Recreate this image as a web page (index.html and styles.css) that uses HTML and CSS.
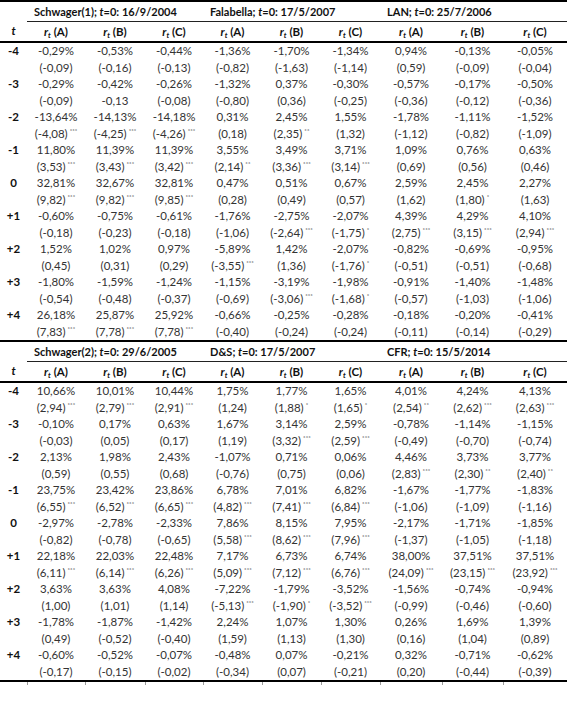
FILE: index.html
```html
<!DOCTYPE html>
<html>
<head>
<meta charset="utf-8">
<link rel="stylesheet" href="styles.css">
</head>
<body>
<table class="tbl">
<colgroup>
<col class="c-t"><col class="c1"><col class="c2"><col class="c3"><col class="c4"><col class="c5"><col class="c6"><col class="c7"><col class="c8"><col class="c9">
</colgroup>
<tbody class="panel first">
<tr class="title-row"><th class="blank"></th><th colspan="3" class="title">Schwager(1); <i>t</i>=0: 16/9/2004</th><th colspan="3" class="title">Falabella; <i>t</i>=0: 17/5/2007</th><th colspan="3" class="title">LAN; <i>t</i>=0: 25/7/2006</th></tr>
<tr class="head-row"><th><i>t</i></th><th><i>r<sub>t</sub></i> (A)</th><th><i>r<sub>t</sub></i> (B)</th><th><i>r<sub>t</sub></i> (C)</th><th><i>r<sub>t</sub></i> (A)</th><th><i>r<sub>t</sub></i> (B)</th><th><i>r<sub>t</sub></i> (C)</th><th><i>r<sub>t</sub></i> (A)</th><th><i>r<sub>t</sub></i> (B)</th><th><i>r<sub>t</sub></i> (C)</th></tr>
<tr><th>-4</th><td>-0,29%</td><td>-0,53%</td><td>-0,44%</td><td>-1,36%</td><td>-1,70%</td><td>-1,34%</td><td>0,94%</td><td>-0,13%</td><td>-0,05%</td></tr>
<tr><th></th><td>(-0,09)</td><td>(-0,16)</td><td>(-0,13)</td><td>(-0,82)</td><td>(-1,63)</td><td>(-1,14)</td><td>(0,59)</td><td>(-0,09)</td><td>(-0,04)</td></tr>
<tr><th>-3</th><td>-0,29%</td><td>-0,42%</td><td>-0,26%</td><td>-1,32%</td><td>0,37%</td><td>-0,30%</td><td>-0,57%</td><td>-0,17%</td><td>-0,50%</td></tr>
<tr><th></th><td>(-0,09)</td><td>-0,13</td><td>(-0,08)</td><td>(-0,80)</td><td>(0,36)</td><td>(-0,25)</td><td>(-0,36)</td><td>(-0,12)</td><td>(-0,36)</td></tr>
<tr><th>-2</th><td>-13,64%</td><td>-14,13%</td><td>-14,18%</td><td>0,31%</td><td>2,45%</td><td>1,55%</td><td>-1,78%</td><td>-1,11%</td><td>-1,52%</td></tr>
<tr><th></th><td>(-4,08)<sup>***</sup></td><td>(-4,25)<sup>***</sup></td><td>(-4,26)<sup>***</sup></td><td>(0,18)</td><td>(2,35)<sup>**</sup></td><td>(1,32)</td><td>(-1,12)</td><td>(-0,82)</td><td>(-1,09)</td></tr>
<tr><th>-1</th><td>11,80%</td><td>11,39%</td><td>11,39%</td><td>3,55%</td><td>3,49%</td><td>3,71%</td><td>1,09%</td><td>0,76%</td><td>0,63%</td></tr>
<tr><th></th><td>(3,53)<sup>***</sup></td><td>(3,43)<sup>***</sup></td><td>(3,42)<sup>***</sup></td><td>(2,14)<sup>**</sup></td><td>(3,36)<sup>***</sup></td><td>(3,14)<sup>***</sup></td><td>(0,69)</td><td>(0,56)</td><td>(0,46)</td></tr>
<tr><th>0</th><td>32,81%</td><td>32,67%</td><td>32,81%</td><td>0,47%</td><td>0,51%</td><td>0,67%</td><td>2,59%</td><td>2,45%</td><td>2,27%</td></tr>
<tr><th></th><td>(9,82)<sup>***</sup></td><td>(9,82)<sup>***</sup></td><td>(9,85)<sup>***</sup></td><td>(0,28)</td><td>(0,49)</td><td>(0,57)</td><td>(1,62)</td><td>(1,80)<sup>*</sup></td><td>(1,63)</td></tr>
<tr><th>+1</th><td>-0,60%</td><td>-0,75%</td><td>-0,61%</td><td>-1,76%</td><td>-2,75%</td><td>-2,07%</td><td>4,39%</td><td>4,29%</td><td>4,10%</td></tr>
<tr><th></th><td>(-0,18)</td><td>(-0,23)</td><td>(-0,18)</td><td>(-1,06)</td><td>(-2,64)<sup>***</sup></td><td>(-1,75)<sup>*</sup></td><td>(2,75)<sup>***</sup></td><td>(3,15)<sup>***</sup></td><td>(2,94)<sup>***</sup></td></tr>
<tr><th>+2</th><td>1,52%</td><td>1,02%</td><td>0,97%</td><td>-5,89%</td><td>1,42%</td><td>-2,07%</td><td>-0,82%</td><td>-0,69%</td><td>-0,95%</td></tr>
<tr><th></th><td>(0,45)</td><td>(0,31)</td><td>(0,29)</td><td>(-3,55)<sup>***</sup></td><td>(1,36)</td><td>(-1,76)<sup>*</sup></td><td>(-0,51)</td><td>(-0,51)</td><td>(-0,68)</td></tr>
<tr><th>+3</th><td>-1,80%</td><td>-1,59%</td><td>-1,24%</td><td>-1,15%</td><td>-3,19%</td><td>-1,98%</td><td>-0,91%</td><td>-1,40%</td><td>-1,48%</td></tr>
<tr><th></th><td>(-0,54)</td><td>(-0,48)</td><td>(-0,37)</td><td>(-0,69)</td><td>(-3,06)<sup>***</sup></td><td>(-1,68)<sup>*</sup></td><td>(-0,57)</td><td>(-1,03)</td><td>(-1,06)</td></tr>
<tr><th>+4</th><td>26,18%</td><td>25,87%</td><td>25,92%</td><td>-0,66%</td><td>-0,25%</td><td>-0,28%</td><td>-0,18%</td><td>-0,20%</td><td>-0,41%</td></tr>
<tr class="last"><th></th><td>(7,83)<sup>***</sup></td><td>(7,78)<sup>***</sup></td><td>(7,78)<sup>***</sup></td><td>(-0,40)</td><td>(-0,24)</td><td>(-0,24)</td><td>(-0,11)</td><td>(-0,14)</td><td>(-0,29)</td></tr>
</tbody>
<tbody class="panel">
<tr class="title-row"><th class="blank"></th><th colspan="3" class="title">Schwager(2); <i>t</i>=0: 29/6/2005</th><th colspan="3" class="title">D&amp;S; <i>t</i>=0: 17/5/2007</th><th colspan="3" class="title">CFR; <i>t</i>=0: 15/5/2014</th></tr>
<tr class="head-row"><th><i>t</i></th><th><i>r<sub>t</sub></i> (A)</th><th><i>r<sub>t</sub></i> (B)</th><th><i>r<sub>t</sub></i> (C)</th><th><i>r<sub>t</sub></i> (A)</th><th><i>r<sub>t</sub></i> (B)</th><th><i>r<sub>t</sub></i> (C)</th><th><i>r<sub>t</sub></i> (A)</th><th><i>r<sub>t</sub></i> (B)</th><th><i>r<sub>t</sub></i> (C)</th></tr>
<tr><th>-4</th><td>10,66%</td><td>10,01%</td><td>10,44%</td><td>1,75%</td><td>1,77%</td><td>1,65%</td><td>4,01%</td><td>4,24%</td><td>4,13%</td></tr>
<tr><th></th><td>(2,94)<sup>***</sup></td><td>(2,79)<sup>***</sup></td><td>(2,91)<sup>***</sup></td><td>(1,24)</td><td>(1,88)<sup>*</sup></td><td>(1,65)<sup>*</sup></td><td>(2,54)<sup>**</sup></td><td>(2,62)<sup>***</sup></td><td>(2,63)<sup>***</sup></td></tr>
<tr><th>-3</th><td>-0,10%</td><td>0,17%</td><td>0,63%</td><td>1,67%</td><td>3,14%</td><td>2,59%</td><td>-0,78%</td><td>-1,14%</td><td>-1,15%</td></tr>
<tr><th></th><td>(-0,03)</td><td>(0,05)</td><td>(0,17)</td><td>(1,19)</td><td>(3,32)<sup>***</sup></td><td>(2,59)<sup>***</sup></td><td>(-0,49)</td><td>(-0,70)</td><td>(-0,74)</td></tr>
<tr><th>-2</th><td>2,13%</td><td>1,98%</td><td>2,43%</td><td>-1,07%</td><td>0,71%</td><td>0,06%</td><td>4,46%</td><td>3,73%</td><td>3,77%</td></tr>
<tr><th></th><td>(0,59)</td><td>(0,55)</td><td>(0,68)</td><td>(-0,76)</td><td>(0,75)</td><td>(0,06)</td><td>(2,83)<sup>***</sup></td><td>(2,30)<sup>**</sup></td><td>(2,40)<sup>**</sup></td></tr>
<tr><th>-1</th><td>23,75%</td><td>23,42%</td><td>23,86%</td><td>6,78%</td><td>7,01%</td><td>6,82%</td><td>-1,67%</td><td>-1,77%</td><td>-1,83%</td></tr>
<tr><th></th><td>(6,55)<sup>***</sup></td><td>(6,52)<sup>***</sup></td><td>(6,65)<sup>***</sup></td><td>(4,82)<sup>***</sup></td><td>(7,41)<sup>***</sup></td><td>(6,84)<sup>***</sup></td><td>(-1,06)</td><td>(-1,09)</td><td>(-1,16)</td></tr>
<tr><th>0</th><td>-2,97%</td><td>-2,78%</td><td>-2,33%</td><td>7,86%</td><td>8,15%</td><td>7,95%</td><td>-2,17%</td><td>-1,71%</td><td>-1,85%</td></tr>
<tr><th></th><td>(-0,82)</td><td>(-0,78)</td><td>(-0,65)</td><td>(5,58)<sup>***</sup></td><td>(8,62)<sup>***</sup></td><td>(7,96)<sup>***</sup></td><td>(-1,37)</td><td>(-1,05)</td><td>(-1,18)</td></tr>
<tr><th>+1</th><td>22,18%</td><td>22,03%</td><td>22,48%</td><td>7,17%</td><td>6,73%</td><td>6,74%</td><td>38,00%</td><td>37,51%</td><td>37,51%</td></tr>
<tr><th></th><td>(6,11)<sup>***</sup></td><td>(6,14)<sup>***</sup></td><td>(6,26)<sup>***</sup></td><td>(5,09)<sup>***</sup></td><td>(7,12)<sup>***</sup></td><td>(6,76)<sup>***</sup></td><td>(24,09)<sup>***</sup></td><td>(23,15)<sup>***</sup></td><td>(23,92)<sup>***</sup></td></tr>
<tr><th>+2</th><td>3,63%</td><td>3,63%</td><td>4,08%</td><td>-7,22%</td><td>-1,79%</td><td>-3,52%</td><td>-1,56%</td><td>-0,74%</td><td>-0,94%</td></tr>
<tr><th></th><td>(1,00)</td><td>(1,01)</td><td>(1,14)</td><td>(-5,13)<sup>***</sup></td><td>(-1,90)<sup>*</sup></td><td>(-3,52)<sup>***</sup></td><td>(-0,99)</td><td>(-0,46)</td><td>(-0,60)</td></tr>
<tr><th>+3</th><td>-1,78%</td><td>-1,87%</td><td>-1,42%</td><td>2,24%</td><td>1,07%</td><td>1,30%</td><td>0,26%</td><td>1,69%</td><td>1,39%</td></tr>
<tr><th></th><td>(0,49)</td><td>(-0,52)</td><td>(-0,40)</td><td>(1,59)</td><td>(1,13)</td><td>(1,30)</td><td>(0,16)</td><td>(1,04)</td><td>(0,89)</td></tr>
<tr><th>+4</th><td>-0,60%</td><td>-0,52%</td><td>-0,07%</td><td>-0,48%</td><td>0,07%</td><td>-0,21%</td><td>0,32%</td><td>-0,71%</td><td>-0,62%</td></tr>
<tr class="last"><th></th><td>(-0,17)</td><td>(-0,15)</td><td>(-0,02)</td><td>(-0,34)</td><td>(0,07)</td><td>(-0,21)</td><td>(0,20)</td><td>(-0,44)</td><td>(-0,39)</td></tr>
<tr class="ticks"><td></td><td></td><td></td><td></td><td></td><td></td><td></td><td></td><td></td><td></td></tr>
</tbody>
</table>
</body>
</html>
```

FILE: styles.css
```css
html, body {
  margin: 0;
  padding: 0;
  background: #ffffff;
}

.tbl {
  border-collapse: collapse;
  table-layout: fixed;
  width: 567px;
  font-family: Lato, "Open Sans", "Liberation Sans", sans-serif;
  font-size: 11.5px;
  color: #333333;
}

.c-t { width: 27px; }
.c1 { width: 58px; }
.c2 { width: 60px; }
.c3 { width: 58px; }
.c4 { width: 59px; }
.c5 { width: 59px; }
.c6 { width: 59px; }
.c7 { width: 62px; }
.c8 { width: 61px; }
.c9 { width: 64px; }

.tbl td,
.tbl th {
  padding: 0;
  height: 16.5px;
  line-height: 14px;
  text-align: center;
  vertical-align: middle;
  white-space: nowrap;
}

.tbl th {
  font-weight: bold;
  color: #111111;
}

.tbl td {
  font-weight: normal;
}

.tbl sup {
  font-size: 6px;
  line-height: 0;
  vertical-align: 5px;
  margin-left: 2px;
  letter-spacing: 0;
}

.tbl sub {
  font-size: 7.5px;
  line-height: 0;
  vertical-align: -2px;
}

.title-row th {
  height: 19px;
  border-top: 2px solid #000000;
}

.title-row .title {
  text-align: left;
  padding-left: 7px;
  font-size: 11px;
  border-bottom: 1px solid #222222;
}

.head-row th {
  height: 19px;
  border-bottom: 2px solid #000000;
}

.last td,
.last th {
  border-bottom: 2px solid #000000;
}

.ticks td {
  height: 3px;
  line-height: 0;
  border-left: 1px solid #9a9a9a;
}

.ticks td:first-child {
  border-left: none;
}
```
